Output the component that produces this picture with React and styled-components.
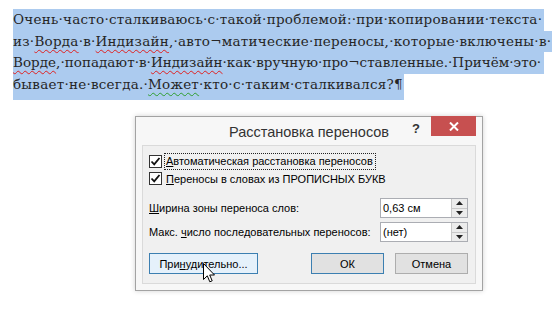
import React from "react";
import styled, { createGlobalStyle } from "styled-components";

const Global = createGlobalStyle`
  html, body { margin: 0; padding: 0; background: #ffffff; }
  body { width: 554px; height: 311px; overflow: hidden; }
`;

const Page = styled.div`
  position: relative;
  width: 554px;
  height: 311px;
`;

const Doc = styled.div`
  padding: 9px 0 0 13px;
  font-family: "DejaVu Serif", "Liberation Serif", serif;
  font-size: 13.5px;
  color: #262626;
`;

const Line = styled.div`
  width: fit-content;
  min-width: ${(p) => (p.$last ? "0" : "530px")};
  height: ${(p) => (p.$last ? "26.5px" : "21.5px")};
  line-height: 21.5px;
  letter-spacing: ${(p) => (p.$tight ? "0.02px" : "0.24px")};
  background: #accbef;
  white-space: pre;
  padding-right: 1px;
`;

const Wavy = styled.span`
  text-decoration-line: underline;
  text-decoration-style: wavy;
  text-decoration-color: ${(p) => (p.$green ? "#2e9e2e" : "#e02020")};
  text-decoration-thickness: 1px;
  text-underline-offset: 3px;
`;

const DialogArea = styled.div`
  padding: 16px 0 0 135px;
`;

const Dialog = styled.div`
  position: relative;
  box-sizing: border-box;
  width: 348px;
  height: 175px;
  border: 1px solid #a3a3a3;
  background: #f7f7f7;
  box-shadow: 0 0 5px rgba(0, 0, 0, 0.18);
  padding: 0 6px 6px 6px;
  display: flex;
  flex-direction: column;
  font-family: "Liberation Sans", Arial, sans-serif;
  font-size: 11px;
  color: #000;
  white-space: nowrap;
`;

const TitleBar = styled.div`
  height: 28px;
  display: grid;
  grid-template-columns: 1fr auto 1fr;
  align-items: center;
`;

const Title = styled.div`
  grid-column: 2;
  font-size: 14.5px;
  color: #333;
  padding-top: 1px;
`;

const Controls = styled.div`
  grid-column: 3;
  justify-self: end;
  align-self: start;
  display: flex;
  align-items: flex-start;
  margin-top: -1px;
`;

const Help = styled.span`
  font-weight: bold;
  font-size: 13px;
  color: #333;
  margin: 5px 11px 0 0;
`;

const Close = styled.div`
  width: 45px;
  height: 20px;
  background: #c75050;
  display: flex;
  align-items: center;
  justify-content: center;
`;

const Panel = styled.div`
  flex: 1;
  border: 1px solid #dadada;
  background: #f0f0f0;
  padding: 7px 7px 9px 6px;
  display: flex;
  flex-direction: column;
`;

const CheckRow = styled.div`
  height: 17px;
  display: flex;
  align-items: center;
  gap: 4px;
`;

const Box = styled.div`
  box-sizing: border-box;
  width: 13px;
  height: 13px;
  border: 1px solid #333;
  background: #fff;
  display: flex;
  align-items: center;
  justify-content: center;
`;

const Focus = styled.span`
  outline: 1px dotted #222;
  outline-offset: 1px;
  padding: 0 1px 0 0;
  line-height: 13px;
`;

const U = styled.span`
  text-decoration: underline;
  text-underline-offset: 1px;
`;

const Spins = styled.div`
  margin-top: 11px;
  display: flex;
  flex-direction: column;
  gap: 4px;
`;

const SpinRow = styled.div`
  display: grid;
  grid-template-columns: 1fr 88px;
  align-items: center;
`;

const SpinBox = styled.div`
  box-sizing: border-box;
  height: 20px;
  border: 1px solid #abadb3;
  background: #fff;
  display: flex;
  align-items: center;
`;

const SpinValue = styled.span`
  flex: 1;
  padding-left: 2px;
`;

const SpinBtns = styled.div`
  width: 15px;
  height: 18px;
  display: flex;
  flex-direction: column;
  border-left: 1px solid #c8c8c8;
`;

const SpinBtn = styled.div`
  flex: 1;
  background: #ececec;
  display: flex;
  align-items: center;
  justify-content: center;
  & + & { border-top: 1px solid #c8c8c8; }
`;

const Buttons = styled.div`
  margin-top: 11px;
  display: flex;
  gap: 11px;
`;

const Button = styled.div`
  box-sizing: border-box;
  width: ${(p) => p.$w}px;
  height: 21px;
  border: 1px solid ${(p) => (p.$blue ? "#3c7fb1" : "#adadad")};
  background: ${(p) => (p.$hover ? "#e5f1fb" : "#e1e1e1")};
  display: flex;
  align-items: center;
  justify-content: center;
  margin-left: ${(p) => (p.$push ? "auto" : "0")};
`;

const Cursor = styled.svg`
  position: absolute;
  left: 67px;
  top: 146px;
`;

const Tri = ({ up }) => (
  <svg width="7" height="4" viewBox="0 0 7 4">
    <path d={up ? "M0 4 L3.5 0 L7 4 Z" : "M0 0 L3.5 4 L7 0 Z"} fill="#222" />
  </svg>
);

const Check = () => (
  <svg width="11" height="11" viewBox="0 0 11 11">
    <path d="M1.5 5.5 L4.2 8.3 L9.5 2" fill="none" stroke="#111" strokeWidth="1.8" />
  </svg>
);

export default function App() {
  return (
    <Page>
      <Global />
      <Doc>
        <Line>Очень·часто·сталкиваюсь·с·такой·проблемой:·при·копировании·текста·</Line>
        <Line>
          из·<Wavy>Ворда</Wavy>·в·<Wavy>Индизайн</Wavy>,·авто¬матические·переносы,·которые·включены·в·
        </Line>
        <Line $tight>
          <Wavy>Ворде</Wavy>,·попадают·в·<Wavy>Индизайн</Wavy>·как·вручную·про¬ставленные.·Причём·это·
        </Line>
        <Line $last>
          бывает·не·всегда.·<Wavy $green>Может</Wavy>·кто·с·таким·сталкивался?¶
        </Line>
      </Doc>
      <DialogArea>
        <Dialog>
          <TitleBar>
            <Title>Расстановка переносов</Title>
            <Controls>
              <Help>?</Help>
              <Close>
                <svg width="10" height="9" viewBox="0 0 10 9">
                  <path d="M1 0.5 L9 8.5 M9 0.5 L1 8.5" stroke="#fff" strokeWidth="2" />
                </svg>
              </Close>
            </Controls>
          </TitleBar>
          <Panel>
            <CheckRow>
              <Box><Check /></Box>
              <Focus><U>А</U>втоматическая расстановка переносов</Focus>
            </CheckRow>
            <CheckRow>
              <Box><Check /></Box>
              <span><U>П</U>ереносы в словах из ПРОПИСНЫХ БУКВ</span>
            </CheckRow>
            <Spins>
              <SpinRow>
                <span><U>Ш</U>ирина зоны переноса слов:</span>
                <SpinBox>
                  <SpinValue>0,63 см</SpinValue>
                  <SpinBtns>
                    <SpinBtn><Tri up /></SpinBtn>
                    <SpinBtn><Tri /></SpinBtn>
                  </SpinBtns>
                </SpinBox>
              </SpinRow>
              <SpinRow>
                <span>Макс. <U>ч</U>исло последовательных переносов:</span>
                <SpinBox>
                  <SpinValue>(нет)</SpinValue>
                  <SpinBtns>
                    <SpinBtn><Tri up /></SpinBtn>
                    <SpinBtn><Tri /></SpinBtn>
                  </SpinBtns>
                </SpinBox>
              </SpinRow>
            </Spins>
            <Buttons>
              <Button $w={109} $blue $hover>При<U>н</U>удительно...</Button>
              <Button $w={73} $blue $push>ОК</Button>
              <Button $w={73}>Отмена</Button>
            </Buttons>
          </Panel>
          <Cursor width="13" height="20" viewBox="0 0 13 20">
            <path
              d="M0.5 0.5 L0.5 16.5 L4.3 12.8 L6.8 18.8 L9.2 17.8 L6.7 12 L11.5 12 Z"
              fill="#fff"
              stroke="#000"
              strokeWidth="1"
              strokeLinejoin="miter"
            />
          </Cursor>
        </Dialog>
      </DialogArea>
    </Page>
  );
}
